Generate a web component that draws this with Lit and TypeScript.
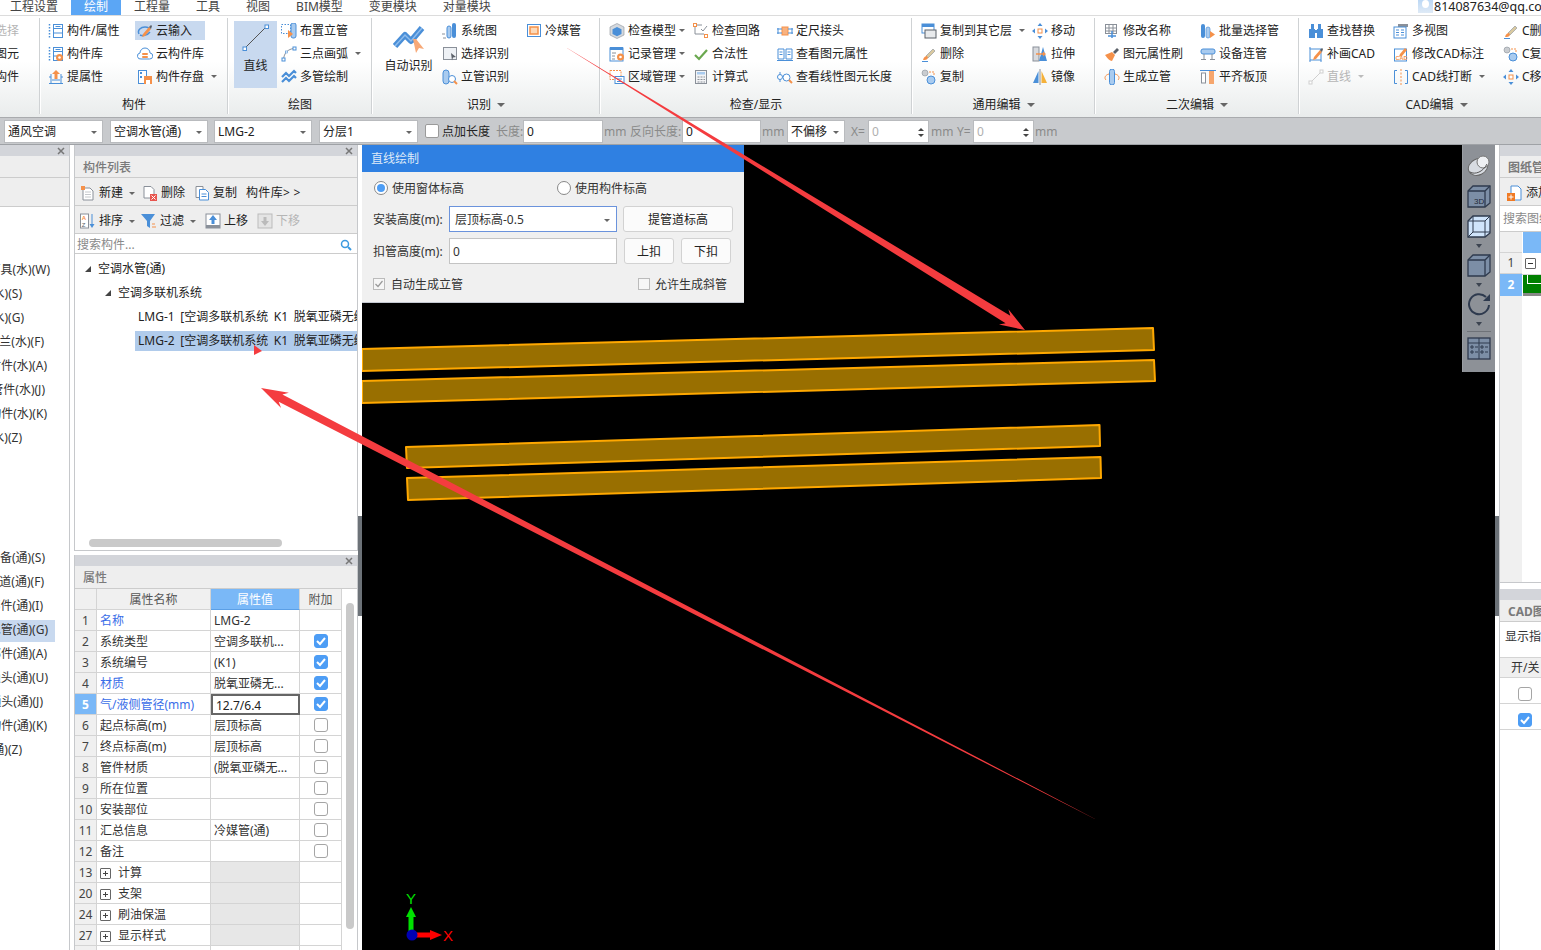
import { LitElement, html, css, svg } from "lit";
import { customElement } from "lit/decorators.js";

const B = "#4a8fd8", LB = "#a9cbef", O = "#f5914a", G = "#8a9099", D = "#5a6068";
const S = (c: unknown, w = 16, h = 16) => html`<svg width=${w} height=${h} viewBox="0 0 ${w} ${h}" fill="none">${c}</svg>`;

const pencil = svg`<path d="M6 11l6-7 2 2-6 7-3 1z" fill=${O}/><path d="M12 4l2-2 1 1-1 3z" fill=${D}/>`;
const brushI = svg`<path d="M5 10l7-7 2 2-7 7z" fill="#d9c9a0" stroke=${G} stroke-width=".6"/><path d="M2 14c1-3 2-4 4-4l1 2c-1 2-3 2-5 2z" fill=${O}/><path d="M1 15.500h6" stroke=${B}/>`;
const copyI = svg`<circle cx="4" cy="4" r="3" fill="#c9ccd0" stroke=${G} stroke-width=".6"/><circle cx="10" cy="11" r="4" fill=${LB} stroke=${B}/><path d="M8 3h5v3" stroke=${O} stroke-dasharray="2 1"/>`;
const moveI = svg`<path d="M8 0l2.500 3h-5zM8 16l2.500-3h-5zM0 8l3-2.500v5zM16 8l-3-2.500v5z" fill=${B}/><rect x="6" y="6" width="4" height="4" fill="#fff" stroke=${O}/>`;
const listI = svg`<path d="M1.500 1v14" stroke=${B} stroke-dasharray="1.500 1.500" stroke-width="1.500"/><rect x="5.500" y="1.500" width="9" height="13" stroke=${B}/><path d="M5.500 5.500h9M5.500 10h9" stroke=${B}/><rect x="7.500" y="3" width="5" height="1" fill=${B}/>`;

const ICONS: Record<string, unknown> = {
  list: S(listI),
  lib: S(svg`${listI}<circle cx="11.500" cy="11.500" r="3.500" fill=${O}/><circle cx="11.500" cy="11.500" r="1.300" fill="#fff"/>`),
  pick: S(svg`<path d="M8 1l4 4H9.500v5h-3V5H4z" fill=${O}/><path d="M1 8h2M1 14.500h14M13 8h2M4 11h8" stroke=${B}/><path d="M3 5v9M13 5v9" stroke=${B}/>`),
  cloudIn: S(svg`<path d="M2 11c-2-4 2-7 6-7 2 0 3 .5 4 1" stroke=${B} stroke-width="1.500"/><path d="M3 12c2 1 7 1 10-3" stroke=${B} stroke-width="1.500"/>${pencil}`),
  cloud: S(svg`<path d="M4 13a3 3 0 0 1-1-6 5 5 0 0 1 10 0 3 3 0 0 1-.500 6z" stroke=${B} fill="#fff"/><rect x="5" y="7" width="6" height="2" rx="1" fill=${O}/><rect x="5" y="10" width="6" height="2" rx="1" fill=${O}/>`),
  save: S(svg`<rect x="1.500" y="1.500" width="8" height="13" fill="#fff" stroke=${B}/><rect x="3" y="3" width="2" height="2" fill=${B}/><rect x="3" y="7" width="2" height="2" fill=${B}/><rect x="7" y="7" width="8" height="8" fill=${O}/><rect x="9" y="11" width="4" height="4" fill="#fff"/>`),
  place: S(svg`<rect x=".500" y="1.500" width="9" height="9" stroke=${B} stroke-dasharray="1.500 1.500"/><rect x="10" y="0" width="5" height="15" rx="2" fill=${LB} stroke=${B}/><path d="M7 7l5 4-5 4z" fill=${O}/>`),
  arc: S(svg`<path d="M2.500 13.500C3 7 7 3 13 2.500" stroke=${G}/><rect x="1" y="12" width="3" height="3" fill="#fff" stroke=${B}/><rect x="12" y="1" width="3" height="3" fill="#fff" stroke=${B}/><rect x="4.500" y="5" width="2" height="2" fill="#fff" stroke=${B} stroke-width=".6"/>`),
  multi: S(svg`<path d="M1 8l4-4 3 3 5-5 2 2M1 13l4-4 3 3 5-5 2 2" stroke=${B} stroke-width="2.200"/>`),
  sys: S(svg`<rect x="5" y="3" width="4" height="12" rx="2" fill=${LB} stroke=${B}/><rect x="10" y="0" width="4" height="15" rx="2" fill=${B}/><path d="M0 11h3M1 15h3" stroke=${G}/>`),
  sel: S(svg`<rect x="1.500" y="1.500" width="13" height="12" fill="#eef1f5" stroke=${G}/><path d="M9 7l5 4-3 .5-1 3z" fill=${D}/>`),
  vr: S(svg`<rect x="1" y="1" width="6" height="14" rx="3" fill=${LB} stroke=${B}/><circle cx="10" cy="10" r="3.500" fill="#fff" stroke=${B}/><path d="M12 12l3 3" stroke=${O} stroke-width="2"/>`),
  cool: S(svg`<rect x="1.500" y="1.500" width="13" height="12" stroke=${B}/><rect x="4" y="4" width="8" height="7" stroke=${O} stroke-width="1.500" fill="#fbd9b9"/>`),
  chkM: S(svg`<path d="M8 .500l7 3.500v8l-7 3.500L1 12V4z" fill="#d5d9de" stroke=${G} stroke-width=".6"/><path d="M8 4l4.500 2.200V11L8 13.300 3.500 11V6.200z" fill=${B}/>`),
  rec: S(svg`<rect x="1" y="2" width="13" height="13" fill="#fff" stroke=${B}/><rect x="1" y="1" width="13" height="3" fill=${B}/><path d="M3 7h4M3 10h3M3 13h3" stroke=${G}/><circle cx="11.500" cy="11" r="3.500" fill=${O}/><circle cx="11.500" cy="11" r="1.300" fill="#fff"/>`),
  area: S(svg`<rect x="1" y="1.500" width="11" height="9" fill="#fff" stroke=${O} stroke-dasharray="2 1"/><rect x="6" y="7.500" width="9" height="7" fill="#fff" stroke=${B}/><path d="M8 10h5M8 12.500h5" stroke=${B}/>`),
  loop: S(svg`<rect x=".500" y=".500" width="3" height="3" fill="#fff" stroke=${O}/><rect x="11.500" y="11.500" width="3" height="3" fill="#fff" stroke=${O}/><path d="M2 4v7h9M4 2h5M8 6l2 2 4-5" stroke=${G}/>`),
  ok: S(svg`<path d="M2 9l4 4 8-9" stroke="#6aa84f" stroke-width="2.200"/>`),
  calc: S(svg`<rect x="2.500" y="1.500" width="11" height="13" fill="#f3f4f6" stroke=${G}/><rect x="4" y="3" width="8" height="2.500" fill=${LB}/><path d="M4.500 8h2M7.500 8h2M10.500 8h1.500M4.500 10.500h2M7.500 10.500h2M10.500 10.500h1.500M4.500 13h2M7.500 13h2M10.500 13h1.500" stroke=${G}/>`),
  fix: S(svg`<rect x="5" y="4" width="6" height="8" fill=${O} fill-opacity=".7" stroke=${O}/><path d="M0 6h5M0 10h5M11 6h5M11 10h5" stroke=${B}/><path d="M1 5v6M15 5v6" stroke=${B}/>`),
  book: S(svg`<path d="M1 3h6v10H1zM9 3h6v10H9z" stroke=${B} fill="#fff"/><path d="M2.500 6h3M2.500 8.500h3M10.500 6h3M10.500 8.500h3M0 14.500h16" stroke=${B}/>`),
  len: S(svg`<path d="M3 3v10" stroke=${B}/><circle cx="3" cy="8" r="2.500" fill="#fff" stroke=${B}/><circle cx="9.500" cy="8.500" r="3.500" fill="#fff" stroke=${B}/><path d="M12 11l3 3" stroke=${O} stroke-width="2"/>`),
  layer: S(svg`<rect x="1" y="1" width="12" height="9" fill="#fff" stroke=${B}/><rect x="1" y="1" width="12" height="3" fill=${B}/><rect x="4" y="7" width="11" height="8" fill="#e8eaec" stroke=${D}/>`),
  del: S(brushI), copy: S(copyI), move: S(moveI),
  stretch: S(svg`<rect x="1" y="1" width="6" height="14" fill="#d8dade" stroke=${G}/><path d="M7 15L11 1l4 14z" fill=${B}/><path d="M4 8h8" stroke=${O} stroke-width="1.500"/><path d="M11 5.500l3 2.500-3 2.500z" fill=${O}/>`),
  mirror: S(svg`<path d="M1 14L6.500 2v12z" fill=${B}/><path d="M8 0v16" stroke=${G}/><path d="M9.500 2L15 14H9.500z" fill="#f5b13a"/>`),
  name: S(svg`<rect x="1.500" y="1.500" width="11" height="9" fill="#fff" stroke=${G}/><path d="M1.500 5h11M1.500 8h11M5 1.500v9M9 1.500v9" stroke=${G}/><path d="M8 8v7M4 13h8" stroke=${B} stroke-width="1.500"/>`),
  paint: S(svg`<path d="M9 6l4-4 2 2-4 4z" fill=${D}/><path d="M1 9l7-3 3 3-3 6c-2 0-5-3-7-6z" fill=${O}/>`),
  gen: S(svg`<rect x="5.500" y="0" width="5" height="16" rx="2.500" fill=${LB} stroke=${B}/><path d="M5 5C1 6 0 9 2 11M11 5c4 1 5 4 3 6" stroke=${O}/>`),
  bulk: S(svg`<rect x="1" y="1" width="4" height="14" rx="2" fill=${B}/><rect x="6" y="4" width="4" height="11" rx="2" fill=${LB} stroke=${B} stroke-width=".7"/><path d="M10 8l5 3.500-5 3.500z" fill=${O}/>`),
  equip: S(svg`<rect x="1" y="3" width="14" height="5" rx="2" fill=${LB} stroke=${B}/><path d="M4 8v5M12 8v5M1 13.500h5M10 13.500h5" stroke=${G}/>`),
  align: S(svg`<path d="M0 1.500h16" stroke=${B}/><rect x="1.500" y="4" width="4" height="10" fill="#fff" stroke=${G}/><rect x="9" y="2" width="5" height="13" fill=${O} fill-opacity=".8"/>`),
  find: S(svg`<rect x="1" y="6" width="6" height="9" fill=${B}/><rect x="9" y="6" width="6" height="9" fill=${B}/><rect x="3" y="1" width="3" height="5" fill=${B}/><rect x="10" y="1" width="3" height="5" fill=${B}/><rect x="6" y="7" width="4" height="3" fill=${B}/>`),
  redraw: S(svg`<rect x="2" y="3" width="11" height="11" stroke=${B}/><path d="M1 2h2M1 15h2M12 15h2" stroke=${B}/>${pencil}`),
  lineG: S(svg`<path d="M2.500 13.500L13 3" stroke="#cfcfcf"/><rect x="1" y="12" width="3" height="3" fill="#fff" stroke="#cfcfcf"/><rect x="12" y="1" width="3" height="3" fill="#fff" stroke="#cfcfcf"/>`),
  views: S(svg`<rect x="5" y="1" width="10" height="3" fill=${G}/><rect x="1" y="4" width="12" height="11" fill="#fff" stroke=${B}/><path d="M3 7h3M3 9.500h3M3 12h3M8 7h3M8 9.500h3M8 12h3" stroke=${B}/>`),
  markCad: S(svg`<rect x="1.500" y="3" width="12" height="12" fill="#fff" stroke=${B}/><text x="2.500" y="13.500" font-size="5.500" font-weight="700" fill=${O} font-family="Liberation Sans">CAD</text><path d="M7 8l5-6 2 2-5 6-3 .8z" fill=${O}/>`),
  cut: S(svg`<path d="M4 1.500H1.500v13H4M12 1.500h2.500v13H12" stroke=${B}/><path d="M8 0v16" stroke=${O} stroke-dasharray="2 1.500"/>`),
  newI: S(svg`<path d="M3 3h7l3 3v9H3z" fill="#fff" stroke=${G}/><path d="M5 7h6M5 9.500h6M5 12h6" stroke="#c5c8cc"/><path d="M1 1h4v4H1z" fill=${O}/>`),
  delI: S(svg`<path d="M2 1.500h7l3 3V13H2z" fill="#fff" stroke=${G}/><rect x="8" y="9" width="7" height="7" fill="#e8554e"/><path d="M9.500 10.500l4 4M13.500 10.500l-4 4" stroke="#fff"/>`),
  cpI: S(svg`<path d="M2 1.500h7v11H2z" fill="#fff" stroke=${G}/><path d="M5.500 4.500h6l3 3V15h-9z" fill="#fff" stroke=${B}/><path d="M7.500 9h5M7.500 11.500h5" stroke=${B}/>`),
  sortI: S(svg`<rect x=".500" y="1" width="8" height="14" fill="#fff" stroke=${G}/><text x="1.800" y="7" font-size="6" fill=${O} font-family="Liberation Sans" font-weight="700">A</text><text x="1.800" y="14" font-size="6" fill=${D} font-family="Liberation Sans">Z</text><path d="M12 1v12" stroke=${B}/><path d="M9.500 11h5L12 15z" fill=${B}/>`),
  filterI: S(svg`<path d="M0 1h14L9 8v7L6 13V8z" fill=${B}/><path d="M11 11h3M11 14h4" stroke=${O}/>`),
  upI: S(svg`<rect x="1" y="1" width="14" height="14" fill="#fff" stroke=${G}/><rect x="1" y="12" width="14" height="3" fill=${G}/><path d="M8 2l4 5H9.500v4h-3V7H4z" fill=${B}/>`),
  downI: S(svg`<rect x="1" y="1" width="14" height="14" fill="#e4e4e4" stroke="#bbb"/><path d="M8 13L4 8h2.500V4h3v4H12z" fill="#bbb"/>`),
  addI: S(svg`<path d="M4 1h7l3 3v11H4z" fill="#fff" stroke=${B}/><rect x="0" y="8" width="8" height="8" fill="#f07a24"/><path d="M4 9.500v5M1.500 12h5" stroke="#fff"/>`),
};

const ribbon = [
  { w: 40, pad: 0, clip: true, cols: [] as any[], label: "" },
  { w: 188, pad: 8, label: "构件", cols: [
    { w: 89, items: [["list", "构件/属性"], ["lib", "构件库"], ["pick", "提属性"]] },
    { w: 80, items: [["cloudIn", "云输入", "on"], ["cloud", "云构件库"], ["save", "构件存盘", "arrow"]] } ] },
  { w: 144, pad: 6, label: "绘图", big: { w: 43, gap: 4, t: "直线", i: "line", on: true }, cols: [
    { w: 90, items: [["place", "布置立管"], ["arc", "三点画弧", "arrow"], ["multi", "多管绘制"]] } ] },
  { w: 228, pad: 13, label: "识别", more: true, big: { w: 47, gap: 10, t: "自动识别", i: "auto" }, cols: [
    { w: 84, items: [["sys", "系统图"], ["sel", "选择识别"], ["vr", "立管识别"]] },
    { w: 70, items: [["cool", "冷媒管"]] } ] },
  { w: 312, pad: 9, label: "检查/显示", cols: [
    { w: 84, items: [["chkM", "检查模型", "arrow0"], ["rec", "记录管理", "arrow0"], ["area", "区域管理", "arrow0"]] },
    { w: 84, items: [["loop", "检查回路"], ["ok", "合法性"], ["calc", "计算式"]] },
    { w: 130, items: [["fix", "定尺接头"], ["book", "查看图元属性"], ["len", "查看线性图元长度"]] } ] },
  { w: 183, pad: 9, label: "通用编辑", more: true, cols: [
    { w: 111, items: [["layer", "复制到其它层", "arrow"], ["del", "删除"], ["copy", "复制"]] },
    { w: 60, items: [["move", "移动"], ["stretch", "拉伸"], ["mirror", "镜像"]] } ] },
  { w: 204, pad: 9, label: "二次编辑", more: true, cols: [
    { w: 96, items: [["name", "修改名称"], ["paint", "图元属性刷"], ["gen", "生成立管"]] },
    { w: 90, items: [["bulk", "批量选择管"], ["equip", "设备连管"], ["align", "平齐板顶"]] } ] },
  { w: 275, pad: 9, label: "CAD编辑", more: true, last: true, cols: [
    { w: 85, items: [["find", "查找替换"], ["redraw", "补画CAD"], ["lineG", "直线", "grayarrow"]] },
    { w: 110, items: [["views", "多视图"], ["markCad", "修改CAD标注"], ["cut", "CAD线打断", "arrow"]] },
    { w: 70, items: [["del", "C删"], ["copy", "C复"], ["move", "C移"]] } ] },
];

const menu = ["工程设置", "绘制", "工程量", "工具", "视图", "BIM模型", "变更模块", "对量模块"];

const leftTop: [string, number][] = [["灯具(水)(W)", 50], ["设备(水)(S)", 22], ["管道(水)(G)", 24], ["法兰(水)(F)", 44], ["附件(水)(A)", 47], ["管件(水)(J)", 45], ["构件(水)(K)", 47], ["定义(水)(Z)", 22]];
const leftBot: [string, number, boolean?][] = [["设备(通)(S)", 45], ["管道(通)(F)", 44], ["部件(通)(I)", 43], ["水管(通)(G)", 48, true], ["部件(通)(A)", 47], ["通头(通)(U)", 48], ["通头(通)(J)", 43], ["构件(通)(K)", 47], ["义(通)(Z)", 22]];

const props: { n: string; name: string; val?: string; blue?: boolean; cb?: boolean | null; group?: boolean; active?: boolean; edit?: boolean }[] = [
  { n: "1", name: "名称", val: "LMG-2", blue: true, cb: null },
  { n: "2", name: "系统类型", val: "空调多联机...", cb: true },
  { n: "3", name: "系统编号", val: "(K1)", cb: true },
  { n: "4", name: "材质", val: "脱氧亚磷无...", blue: true, cb: true },
  { n: "5", name: "气/液侧管径(mm)", val: "12.7/6.4", blue: true, cb: true, active: true, edit: true },
  { n: "6", name: "起点标高(m)", val: "层顶标高", cb: false },
  { n: "7", name: "终点标高(m)", val: "层顶标高", cb: false },
  { n: "8", name: "管件材质", val: "(脱氧亚磷无...", cb: false },
  { n: "9", name: "所在位置", cb: false },
  { n: "10", name: "安装部位", cb: false },
  { n: "11", name: "汇总信息", val: "冷媒管(通)", cb: false },
  { n: "12", name: "备注", cb: false },
  { n: "13", name: "计算", group: true },
  { n: "20", name: "支架", group: true },
  { n: "24", name: "刷油保温", group: true },
  { n: "27", name: "显示样式", group: true },
  { n: "", name: "", group: false },
];

function arrow(x0: number, y0: number, x1: number, y1: number, w0: number, w1: number, hl: number, hw: number) {
  const L = Math.hypot(x1 - x0, y1 - y0), ux = (x1 - x0) / L, uy = (y1 - y0) / L, px = -uy, py = ux;
  const bx = x1 - ux * hl, by = y1 - uy * hl;
  const p = (x: number, y: number, s: number) => `${(x + px * s).toFixed(1)},${(y + py * s).toFixed(1)}`;
  return [p(x0, y0, w0 / 2), p(bx, by, w1 / 2), p(bx - ux * 5, by - uy * 5, hw / 2), `${x1},${y1}`, p(bx - ux * 5, by - uy * 5, -hw / 2), p(bx, by, -w1 / 2), p(x0, y0, -w0 / 2)].join(" ");
}

const pipes = [
  "362,349 1153,328 1154,350 362,371",
  "362,381 1154,360 1155,381 362,403",
  "406,447 1099.500,425 1100,446 407,468",
  "407,478 1100.500,457 1101,478 408,500",
];

@customElement("app-root")
export class AppRoot extends LitElement {
  static styles = css`
    :host { display: block; width: 1541px; height: 950px; position: relative; overflow: hidden; background: #fff; color: #222;
      font: 12px/16px "Noto Sans", "Noto Sans CJK SC", sans-serif; }
    * { box-sizing: border-box; }
    svg { display: block; flex: none; }
    .app { display: flex; flex-direction: column; height: 950px; }
    .menu { display: flex; height: 15px; flex: none; line-height: 13px; overflow: hidden; color: #444; padding-left: 0; }
    .menu .m { padding: 0 13px; white-space: nowrap; }
    .menu .m:first-child { margin-left: -3px; }
    .menu .m.on { background: #5ba6f5; color: #fff; }
    .user { margin-left: auto; width: 123px; display: flex; gap: 1px; overflow: hidden; white-space: nowrap; font-size: 12.500px; color: #222; }
    .avatar { width: 15px; height: 13px; flex: none; background: linear-gradient(#bcd8f5, #dfeaf6); position: relative; overflow: hidden; }
    .avatar::after { content: ""; position: absolute; left: 4px; top: 0; width: 7px; height: 8px; border-radius: 50%; background: #fff; }
    .ribbon { display: flex; height: 102px; flex: none; overflow: hidden; border-top: 1px solid #dcdcdc; background: linear-gradient(#fff 45%, #e9ecec); }
    .grp { flex: none; position: relative; display: flex; flex-direction: column; padding-top: 3px; }
    .sep { position: absolute; right: -1px; top: 2px; bottom: 3px; width: 2px; border-left: 1px solid #cfd2d4; background: #fff; }
    .body-g { display: flex; height: 69px; flex: none; }
    .col { display: flex; flex-direction: column; flex: none; }
    .it { height: 23px; display: flex; align-items: center; gap: 3px; white-space: nowrap; }
    .it.on { background: #c8d9ef; margin: 2px 0 2px -2px; padding-left: 2px; height: 19px; width: 70px; }
    .it.gray { color: #b5b5b5; }
    .caret { width: 0; height: 0; border: 3px solid transparent; border-top: 3px solid #666; border-bottom: 0; flex: none; }
    .it .caret { margin-left: 4px; }
    .it .caret.a0 { margin-left: 0; }
    .it .caret.g { border-top-color: #bbb; }
    .big { display: flex; flex-direction: column; align-items: center; flex: none; height: 67px; margin-top: 2px; white-space: nowrap; }
    .big.on { background: #c8d9ef; }
    .big .ic { height: 33px; display: flex; align-items: center; justify-content: center; }
    .big .t { margin-top: 4px; }
    .clip { display: flex; flex-direction: column; align-items: flex-end; width: 19px; overflow: hidden; height: 69px; }
    .clip .it { width: 24px; }
    .clip .g1 { color: #b5b5b5; }
    .glabel { display: flex; align-items: center; justify-content: center; gap: 6px; height: 20px; margin-top: 7px; }
    .glabel .caret { border-width: 4px; border-top: 4px solid #666; border-bottom: 0; }
    .tools { height: 28px; flex: none; display: flex; align-items: center; padding-left: 4px; background: #c8cacd; border-top: 1px solid #a9abae; border-bottom: 1px solid #9fa2a6; white-space: nowrap; color: #8a8a8a; }
    .fld { height: 23px; background: #fff; border: 1px solid #b9bbbe; display: flex; align-items: center; padding: 2px 3px 0; color: #222; flex: none; justify-content: space-between; overflow: hidden; }
    .fld.dis { color: #b0b0b0; }
    .fld .caret { margin-right: 2px; }
    .spin { display: flex; flex-direction: column; gap: 3px; margin-right: 1px; }
    .spin i { display: block; width: 0; height: 0; border: 3px solid transparent; border-top: 0; border-bottom: 3px solid #444; }
    .spin i + i { border-bottom: 0; border-top: 3px solid #444; }
    .lbl { flex: none; padding-top: 2px; }
    .lbl.dark { color: #222; }
    .cb0 { width: 14px; height: 14px; border: 1px solid #9a9a9a; border-radius: 2px; background: #fff; flex: none; }
    .main { flex: 1; display: flex; min-height: 0; }
    .strip { height: 11px; flex: none; background: #d3d5da; display: flex; justify-content: flex-end; align-items: center; padding-right: 4px; }
    .title { height: 22px; flex: none; background: #eee; color: #7a7a7a; font-weight: 500; padding: 4px 0 0 8px; border-bottom: 1px solid #ccc; white-space: nowrap; overflow: hidden; }
    .tb { height: 28px; flex: none; background: #eee; border-bottom: 1px solid #ccc; display: flex; align-items: center; white-space: nowrap; overflow: hidden; padding-top: 3px; }
    .left { width: 70px; flex: none; border-right: 1px solid #c6c8cb; display: flex; flex-direction: column; overflow: hidden; }
    .left .tb { height: 29px; }
    .llist { padding-top: 51px; display: flex; flex-direction: column; align-items: flex-start; }
    .lrow { height: 24px; display: flex; align-items: center; justify-content: flex-end; white-space: nowrap; color: #333; position: relative; flex: none; }
    .lrow.on::before { content: ""; position: absolute; left: 0; top: 2px; bottom: 0; width: 55px; background: #c8d9ef; }
    .lrow span { position: relative; }
    .lgap { height: 96px; flex: none; }
    .split { width: 4px; flex: none; position: relative; background: #fff; }
    .split i { position: absolute; left: 0; right: 0; top: 371px; height: 100px; background: #6c7278; }
    .midc { width: 284px; flex: none; display: flex; flex-direction: column; }
    .panel { border-left: 1px solid #c6c8cb; display: flex; flex-direction: column; height: 406px; flex: none; border-bottom: 1px solid #c6c8cb; overflow: hidden; border-right: 1px solid #c6c8cb; }
    .tbi { display: flex; align-items: center; gap: 3px; flex: none; }
    .tbi .caret { margin-left: 3px; }
    .tbi.dis { color: #b5b5b5; }
    .search { height: 20px; flex: none; border-bottom: 1px solid #ccc; display: flex; align-items: center; justify-content: space-between; padding: 2px 5px 0 2px; color: #8a8a8a; }
    .tree { flex: 1; padding-top: 3px; position: relative; display: flex; flex-direction: column; overflow: hidden; }
    .tr { height: 24px; flex: none; display: flex; align-items: center; white-space: nowrap; gap: 6px; }
    .tri { width: 0; height: 0; border-left: 6px solid transparent; border-bottom: 6px solid #444; flex: none; }
    .tr.leaf span { padding: 2px 0 2px 3px; width: 222px; overflow: hidden; flex: none; word-spacing: 2.500px; }
    .tr.sel span { background: #b0cbeb; }
    .hbar { position: absolute; left: 14px; width: 193px; bottom: 3px; height: 8px; border-radius: 4px; background: #c9c9c9; }
    .pgap { height: 4px; flex: none; }
    .prop { flex: 1; border-left: 1px solid #c6c8cb; border-right: 1px solid #c6c8cb; display: flex; flex-direction: column; min-height: 0; overflow: hidden; }
    .prop .title { height: 23px; }
    .pbody { display: flex; flex: 1; min-height: 0; }
    .tbl { width: 267px; flex: none; }
    .row { display: grid; grid-template-columns: 22px 114px 89px 42px; height: 21px; }
    .row > div { border-right: 1px solid #d4d4d4; border-bottom: 1px solid #d4d4d4; display: flex; align-items: center; white-space: nowrap; overflow: hidden; padding: 2px 0 0 3px; color: #333; }
    .row .num { background: #f0f0f0; justify-content: center; padding: 2px 0 0; color: #444; }
    .row.h > div { background: #f0f0f0; justify-content: center; padding: 2px 0 0; color: #555; }
    .row.h .hv { background: #7ab8f7; color: #fff; border-bottom: 1px solid #5b9fe6; }
    .row .num.act { background: #7ab8f7; color: #fff; font-weight: 700; }
    .row .bl { color: #3a6ee8; }
    .row .vg { background: #e7e7e7; }
    .row .edit { border: 2px solid #666; color: #222; }
    .row .cbc { justify-content: center; padding: 0; }
    .cb { width: 14px; height: 14px; border: 1px solid #a5a5a5; border-radius: 3px; background: #fff; display: block; }
    .cb.on { background: #4d9df5; border-color: #4d9df5; display: flex; align-items: center; justify-content: center; }
    .plus { width: 11px; height: 11px; border: 1px solid #666; border-radius: 1px; margin-right: 7px; position: relative; flex: none; }
    .plus::before { content: ""; position: absolute; left: 2px; right: 2px; top: 4px; height: 1px; background: #444; }
    .plus::after { content: ""; position: absolute; top: 2px; bottom: 2px; left: 4px; width: 1px; background: #444; }
    .vtrack { flex: 1; padding: 14px 0 0 4px; }
    .vthumb { width: 8px; height: 326px; background: #c9c9c9; border-radius: 4px; }
    .canvas { flex: none; width: 1133px; background: #000; position: relative; overflow: hidden; }
    .canvas > svg { position: absolute; inset: 0; }
    .dlg { position: absolute; left: 0; top: 0; width: 382px; height: 158px; background: #f0f0f0; border-bottom: 1px solid #c4c8d0; display: flex; flex-direction: column; }
    .dh { height: 27px; flex: none; background: #2f80e2; color: #dfeaf8; padding: 6px 0 0 9px; }
    .dr { display: flex; align-items: center; padding-left: 11px; flex: none; white-space: nowrap; color: #333; }
    .dr > span { padding-top: 2px; }
    .radio { width: 14px; height: 14px; border-radius: 50%; border: 1px solid #888; background: #fff; flex: none; margin-right: 4px; display: flex; align-items: center; justify-content: center; }
    .radio i { width: 8px; height: 8px; border-radius: 50%; background: #4d9df5; display: block; }
    .rlab { width: 76px; flex: none; }
    .inp { height: 26px; width: 168px; flex: none; background: #fff; border: 1px solid #c4c4c4; display: flex; align-items: center; justify-content: space-between; padding: 2px 6px 0 3px; }
    .inp.foc { border-color: #6b93dc; padding-left: 5px; }
    .btn { height: 26px; flex: none; background: #fbfbfb; border: 1px solid #d2d2d2; border-radius: 3px; display: flex; align-items: center; justify-content: center; color: #222; padding-top: 2px; }
    .ck { width: 12px; height: 12px; border: 1px solid #bbb; background: #f6f6f6; flex: none; margin-right: 6px; display: flex; align-items: center; justify-content: center; }
    .float { position: absolute; right: 0; top: 0; width: 33px; height: 227px; background: #8d9197; border-left: 1px solid #9a9ea3; display: flex; flex-direction: column; align-items: center; padding-top: 9px; }
    .float .tcar { width: 0; height: 0; border: 3px solid transparent; border-top: 4px solid #3c4350; border-bottom: 0; margin: 6px 0 5px; }
    .float .fgap { height: 6px; flex: none; }
    .float hr { width: 24px; border: 0; border-top: 1px solid #6e7278; margin: 0 0 4px; }
    .right { flex: 1; min-width: 0; display: flex; flex-direction: column; border-left: 1px solid #c6c8cb; overflow: hidden; white-space: nowrap; }
    .right .tb { padding-left: 7px; gap: 3px; }
    .rs { height: 26px; flex: none; border-bottom: 1px solid #ccc; padding: 5px 0 0 3px; color: #8a8a8a; }
    .rgrid { height: 351px; flex: none; border-bottom: 1px solid #c6c8cb; display: flex; }
    .rnum { width: 22px; background: #f0f0f0; flex: none; display: flex; flex-direction: column; }
    .rnum div { height: 21px; display: flex; align-items: center; justify-content: center; border-bottom: 1px solid #d4d4d4; color: #444; flex: none; }
    .rnum .act { background: #7ab8f7; color: #fff; font-weight: 700; height: 22px; border: 0; }
    .rcol { flex: 1; display: flex; flex-direction: column; }
    .rcol .hb { height: 21px; background: #7ab8f7; flex: none; margin-left: 1px; }
    .rcol .r1 { height: 22px; flex: none; border-bottom: 1px solid #d4d4d4; display: flex; align-items: center; padding-left: 3px; }
    .minus { width: 11px; height: 11px; border: 1px solid #666; border-radius: 1px; position: relative; background: #fff; }
    .minus::before { content: ""; position: absolute; left: 2px; right: 2px; top: 4px; height: 1px; background: #333; }
    .rcol .r2 { height: 21px; flex: none; background: #008000; border-bottom: 3px solid #888; position: relative; margin-left: 1px; }
    .rcol .r2::before { content: ""; position: absolute; left: 4px; top: 0; width: 14px; height: 8px; border-left: 1px solid #fff; border-bottom: 1px solid #fff; }
    .rgap2 { height: 6px; flex: none; }
    .rtitle { font-weight: 700; }
    .rshow { height: 35px; flex: none; padding: 7px 0 0 5px; color: #333; }
    .rhead { height: 21px; flex: none; background: #f0f0f0; border-bottom: 1px solid #d4d4d4; border-top: 1px solid #d4d4d4; padding-left: 11px; display: flex; align-items: center; color: #333; }
    .rchk { height: 26px; flex: none; border-bottom: 1px solid #d4d4d4; display: flex; align-items: center; padding: 6px 0 0 18px; }
    .overlay { position: absolute; left: 0; top: 0; pointer-events: none; }
  `;

  private item(it: any[]) {
    const [i, t, f] = it;
    const car = f === "arrow" ? html`<i class="caret"></i>` : f === "arrow0" ? html`<i class="caret a0"></i>` : f === "grayarrow" ? html`<i class="caret g"></i>` : "";
    return html`<div class="it ${f === "on" ? "on" : ""} ${f === "grayarrow" ? "gray" : ""}">${ICONS[i] as any}<span>${t}</span>${car}</div>`;
  }

  private bigIcon(n: string) {
    if (n === "line") return S(svg`<path d="M2.500 24.500L24.500 2.500" stroke="#555"/><rect x="1" y="23" width="3.500" height="3.500" fill="#fff" stroke=${B}/><rect x="23" y="1" width="3.500" height="3.500" fill="#fff" stroke=${B}/>`, 27, 27);
    return S(svg`<path d="M3 24l10-11 6 6L30 6" stroke=${B} stroke-width="6" stroke-linejoin="round"/><path d="M3 24l10-11 6 6L30 6" stroke="#8fbcec" stroke-width="1.500"/><path d="M21 17l3 0 8 10-5-1-3 5z" fill="#f7a978"/>`, 34, 32);
  }

  private renderGroup(g: any) {
    if (g.clip) {
      return html`<div class="grp" style="width:${g.w}px">
        <div class="clip">
          <div class="it g1"><span>选择</span></div>
          <div class="it"><span>图元</span></div>
          <div class="it"><span>构件</span></div>
        </div><i class="sep"></i></div>`;
    }
    return html`<div class="grp" style="width:${g.w}px">
      <div class="body-g" style="padding-left:${g.pad}px">
        ${g.big ? html`<div class="big ${g.big.on ? "on" : ""}" style="width:${g.big.w}px;margin-right:${g.big.gap}px">
            <div class="ic">${this.bigIcon(g.big.i)}</div><div class="t">${g.big.t}</div></div>` : ""}
        ${g.cols.map((c: any) => html`<div class="col" style="width:${c.w}px">${c.items.map((it: any[]) => this.item(it))}</div>`)}
      </div>
      <div class="glabel"><span>${g.label}</span>${g.more ? html`<i class="caret"></i>` : ""}</div>
      ${g.last ? "" : html`<i class="sep"></i>`}
    </div>`;
  }

  private sel(w: number, t: string) {
    return html`<div class="fld" style="width:${w}px"><span>${t}</span><i class="caret"></i></div>`;
  }
  private fld(w: number, t: string, spin = false) {
    return html`<div class="fld ${spin ? "dis" : ""}" style="width:${w}px"><span>${t}</span>${spin ? html`<span class="spin"><i></i><i></i></span>` : ""}</div>`;
  }
  private lbl(w: number, t: string, dark = false) {
    return html`<span class="lbl ${dark ? "dark" : ""}" style="width:${w}px">${t}</span>`;
  }
  private tbi(ml: number, i: string, t: string, car = 0, dis = false) {
    return html`<div class="tbi ${dis ? "dis" : ""}" style="margin-left:${ml}px">${ICONS[i] as any}<span>${t}</span>${car ? html`<i class="caret"></i>` : ""}</div>`;
  }
  private x() {
    return S(svg`<path d="M1 1l6 6M7 1L1 7" stroke="#777" stroke-width="1.500"/>`, 8, 8);
  }
  private checkMark() {
    return S(svg`<path d="M2 6l3 3 5-6" stroke="#fff" stroke-width="2"/>`, 12, 12);
  }

  render() {
    const a1 = arrow(567, 48, 1025, 330, 0.3, 9, 20, 18);
    const a2 = arrow(1095, 819, 261, 388, 0.3, 8, 22, 17);
    return html`<div class="app">
      <div class="menu">
        ${menu.map((m, i) => html`<div class="m ${i === 1 ? "on" : ""}">${m}</div>`)}
        <div class="user"><i class="avatar"></i><span>814087634@qq.com</span></div>
      </div>
      <div class="ribbon">${ribbon.map((g) => this.renderGroup(g))}</div>
      <div class="tools">
        ${this.sel(99, "通风空调")}${this.lbl(7, "")}${this.sel(98, "空调水管(通)")}${this.lbl(6, "")}${this.sel(98, "LMG-2")}${this.lbl(7, "")}${this.sel(99, "分层1")}${this.lbl(7, "")}
        <i class="cb0"></i>${this.lbl(3, "")}${this.lbl(54, "点加长度", true)}${this.lbl(27, "长度:")}
        ${this.fld(80, "0")}${this.lbl(1, "")}${this.lbl(26, "mm")}${this.lbl(52, "反向长度:")}
        ${this.fld(79, "0")}${this.lbl(1, "")}${this.lbl(25, "mm")}${this.sel(58, "不偏移")}${this.lbl(6, "")}${this.lbl(17, "X=")}
        ${this.fld(61, "0", true)}${this.lbl(2, "")}${this.lbl(26, "mm")}${this.lbl(16, "Y=")}
        ${this.fld(61, "0", true)}${this.lbl(1, "")}${this.lbl(24, "mm")}
      </div>
      <div class="main">
        <div class="left">
          <div class="strip">${this.x()}</div>
          <div class="title"></div>
          <div class="tb"></div>
          <div class="llist">
            ${leftTop.map(([t, r]) => html`<div class="lrow" style="width:${r}px"><span>${t}</span></div>`)}
            <div class="lgap"></div>
            ${leftBot.map(([t, r, on]) => html`<div class="lrow ${on ? "on" : ""}" style="width:${r}px"><span>${t}</span></div>`)}
          </div>
        </div>
        <div class="split"></div>
        <div class="midc">
          <div class="panel">
            <div class="strip">${this.x()}</div>
            <div class="title">构件列表</div>
            <div class="tb">
              ${this.tbi(5, "newI", "新建", 1)}${this.tbi(7, "delI", "删除")}${this.tbi(9, "cpI", "复制")}
              <span style="margin-left:9px;letter-spacing:.3px">构件库&gt; &gt;</span>
            </div>
            <div class="tb">
              ${this.tbi(5, "sortI", "排序", 1)}${this.tbi(6, "filterI", "过滤", 1)}${this.tbi(9, "upI", "上移")}${this.tbi(9, "downI", "下移", 0, true)}
            </div>
            <div class="search"><span>搜索构件...</span>
              ${S(svg`<circle cx="5" cy="5" r="3.500" stroke="#3b9ae0" stroke-width="1.500"/><path d="M8 8l3 3" stroke="#3b9ae0" stroke-width="2"/>`, 12, 12)}</div>
            <div class="tree">
              <div class="tr" style="padding-left:10px"><i class="tri"></i><span style="margin-left:1px">空调水管(通)</span></div>
              <div class="tr" style="padding-left:30px"><i class="tri"></i><span style="margin-left:1px">空调多联机系统</span></div>
              <div class="tr leaf" style="padding-left:60px"><span>LMG-1 [空调多联机系统 K1 脱氧亚磷无缝铜管]</span></div>
              <div class="tr leaf sel" style="padding-left:60px"><span>LMG-2 [空调多联机系统 K1 脱氧亚磷无缝铜管]</span></div>
              <i class="hbar"></i>
            </div>
          </div>
          <div class="pgap"></div>
          <div class="prop">
            <div class="strip">${this.x()}</div>
            <div class="title">属性</div>
            <div class="pbody">
              <div class="tbl">
                <div class="row h"><div></div><div>属性名称</div><div class="hv">属性值</div><div>附加</div></div>
                ${props.map((p) => html`<div class="row">
                  <div class="num ${p.active ? "act" : ""}">${p.n}</div>
                  <div class="${p.blue ? "bl" : ""}">${p.group ? html`<i class="plus"></i>` : ""}${p.name}</div>
                  <div class="${p.group ? "vg" : ""} ${p.edit ? "edit" : ""}">${p.val ?? ""}</div>
                  <div class="cbc">${p.cb === true ? html`<i class="cb on">${this.checkMark()}</i>` : p.cb === false ? html`<i class="cb"></i>` : ""}</div>
                </div>`)}
              </div>
              <div class="vtrack"><div class="vthumb"></div></div>
            </div>
          </div>
        </div>
        <div class="split"><i></i></div>
        <div class="canvas">
          <svg width="1133" height="805" viewBox="362 145 1133 805">
            ${pipes.map((p) => svg`<polygon points=${p} fill="#996f00" stroke="#ffa800" stroke-width="2" stroke-linejoin="round"/>`)}
            <rect x="408.500" y="917" width="5" height="18" fill="#00e000"/>
            <path d="M411 907l5 10h-10z" fill="#00e000"/>
            <text x="411" y="904" font-size="15" fill="#00e000" text-anchor="middle" font-family="Liberation Sans">Y</text>
            <rect x="412" y="932.500" width="18" height="5" fill="#ff0000"/>
            <path d="M442 935l-12-5v10z" fill="#ff0000"/>
            <text x="448" y="941" font-size="15" fill="#ff0000" text-anchor="middle" font-family="Liberation Sans">X</text>
            <circle cx="412" cy="935" r="5.500" fill="#0000b4"/>
          </svg>
          <div class="dlg">
            <div class="dh">直线绘制</div>
            <div class="dr" style="height:32px;padding-left:12px">
              <i class="radio"><i></i></i><span style="width:165px">使用窗体标高</span>
              <i class="radio"></i><span>使用构件标高</span>
            </div>
            <div class="dr" style="margin-top:2px">
              <span class="rlab">安装高度(m):</span>
              <div class="inp foc"><span>层顶标高-0.5</span><i class="caret"></i></div>
              <div class="btn" style="width:110px;margin-left:6px">提管道标高</div>
            </div>
            <div class="dr" style="margin-top:6px">
              <span class="rlab">扣管高度(m):</span>
              <div class="inp"><span>0</span></div>
              <div class="btn" style="width:50px;margin-left:7px">上扣</div>
              <div class="btn" style="width:50px;margin-left:7px">下扣</div>
            </div>
            <div class="dr" style="margin-top:10px;height:20px">
              <i class="ck">${S(svg`<path d="M1.500 5l2.500 2.500L8.500 2" stroke="#999" stroke-width="1.200"/>`, 10, 10)}</i><span style="width:247px">自动生成立管</span>
              <i class="ck" style="margin-right:5px"></i><span>允许生成斜管</span>
            </div>
          </div>
          <div class="float">
            ${S(svg`<ellipse cx="11" cy="13" rx="10" ry="8" fill="#d8dce2" stroke="#666" transform="rotate(-25 11 13)"/><circle cx="16" cy="8" r="6" fill="#eef0f3" stroke="#777"/><path d="M3 18c5 3 13 0 17-8" stroke="#555"/>`, 24, 24)}
            <div class="fgap"></div>
            ${S(svg`<path d="M1 7l5-5h17v17l-5 4H1z" fill="#7c8ea6" stroke="#2e3a4e" stroke-width="1.300"/><path d="M1 7h17v16M18 7l5-5" stroke="#2e3a4e" stroke-width="1.300"/><text x="7" y="20" font-size="8" fill="#1e2836" font-family="Liberation Sans">3D</text>`, 24, 24)}
            <div class="fgap"></div>
            ${S(svg`<path d="M1 7l5-5h17v17l-5 4H1z" fill="#cfe4fb" stroke="#2e3a4e" stroke-width="1.300"/><path d="M1 7h17v16M18 7l5-5M6 2v16H23M6 18l-5 5" stroke="#2e3a4e" stroke-width="1"/>`, 24, 24)}
            <i class="tcar"></i>
            ${S(svg`<path d="M1 7l5-5h17v17l-5 4H1z" fill="#7c8ea6" stroke="#2e3a4e" stroke-width="1.300"/><path d="M1 7h17v16M18 7l5-5" stroke="#2e3a4e" stroke-width="1.300"/>`, 24, 24)}
            <i class="tcar"></i>
            ${S(svg`<path d="M19 5A10 10 0 1 0 22 13" stroke="#2e3a4e" stroke-width="2"/><path d="M23 2v7h-7z" fill="#2e3a4e"/>`, 24, 24)}
            <i class="tcar"></i>
            <hr />
            ${S(svg`<rect x="1" y="2" width="22" height="21" fill="#7c8ea6" stroke="#2e3a4e" stroke-width="1.300"/><path d="M1 7h22M12 2v21M4 10h2v2H4zM8 11h3M4 15h2v2H4zM8 16h3M14 10h2v2h-2zM18 11h3M14 15h2v2h-2zM18 16h3" stroke="#2e3a4e"/>`, 24, 24)}
          </div>
        </div>
        <div class="split"><i></i></div>
        <div class="right">
          <div class="strip"></div>
          <div class="title" style="font-weight:700">图纸管理</div>
          <div class="tb">${ICONS.addI as any}<span>添加图纸</span></div>
          <div class="rs">搜索图纸</div>
          <div class="rgrid">
            <div class="rnum"><div></div><div>1</div><div class="act">2</div></div>
            <div class="rcol"><div class="hb"></div><div class="r1"><i class="minus"></i></div><div class="r2"></div></div>
          </div>
          <div class="rgap2"></div>
          <div class="strip"></div>
          <div class="title rtitle">CAD图层</div>
          <div class="rshow">显示指定图层</div>
          <div class="rhead">开/关</div>
          <div class="rchk"><i class="cb"></i></div>
          <div class="rchk"><i class="cb on">${this.checkMark()}</i></div>
        </div>
      </div>
    </div>
    <svg class="overlay" width="1541" height="950" viewBox="0 0 1541 950">
      <polygon points=${a1} fill="#f43c3f"/>
      <polygon points=${a2} fill="#f43c3f"/>
      <polygon points="254,345 262,351 254,355" fill="#f43c3f"/>
    </svg>`;
  }
}
